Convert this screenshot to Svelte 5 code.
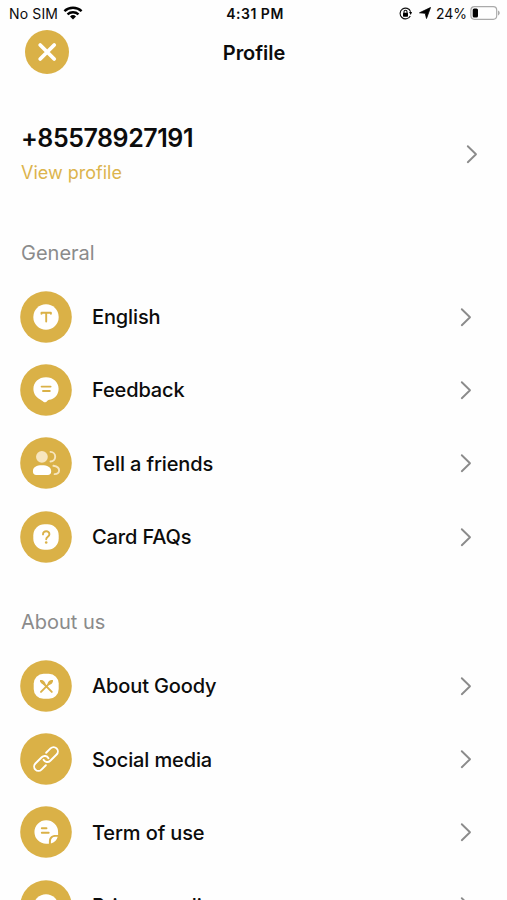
<script lang="ts">
    type Item = { label: string; icon: string };

    const sections: { title: string; items: Item[] }[] = [
        {
            title: "General",
            items: [
                { label: "English", icon: "language" },
                { label: "Feedback", icon: "feedback" },
                { label: "Tell a friends", icon: "friends" },
                { label: "Card FAQs", icon: "faq" }
            ]
        },
        {
            title: "About us",
            items: [
                { label: "About Goody", icon: "goody" },
                { label: "Social media", icon: "link" },
                { label: "Term of use", icon: "terms" },
                { label: "Privacy policy", icon: "privacy" }
            ]
        }
    ];
</script>

{#snippet chevron()}
    <svg class="chevron" width="12" height="20" viewBox="0 0 12 20">
        <path d="M1.8 2.2 10 10.2l-8.200 8" />
    </svg>
{/snippet}

{#snippet rowIcon(name: string)}
    <svg class="row-icon" viewBox="0 0 52 52">
        <circle class="gold" cx="26" cy="26" r="25.800" />
        {#if name === "language"}
            <circle class="white" cx="26" cy="26" r="12.700" />
            <path class="gold-line" d="M21.500 22.800v-1.100h9.400v1.100M26.200 22v8.500" />
        {:else if name === "feedback"}
            <path class="white" d="M26 13.300c7.200 0 12.600 4.900 12.600 11.400 0 6.300-4.500 10.600-9.400 11-1.900.2-2.200 2.600-4 2.600-1.300 0-2.300-1.300-3.500-1.900-5.200-2.300-8.300-6.200-8.300-11.300 0-6.900 5.400-11.800 12.600-11.800z" />
            <path class="gold-line" d="M21.600 22.600h9M23 27h6.800" />
        {:else if name === "friends"}
            <circle class="cream" cx="21.900" cy="19.800" r="5.900" />
            <path class="white" d="M12.900 34.300c0-4.300 3.700-6 9-6s9.300 1.700 9.300 6c0 2.500-1.300 3.700-3.300 3.700H16.200c-2 0-3.300-1.200-3.300-3.700z" />
            <path class="cream-line" d="M30.500 14.900c2.700.2 4.700 2.200 4.700 4.800s-2 4.600-4.700 4.800M33.400 28.800c3.600.6 5.800 2 5.700 4.700-.1 2.200-1.800 3.500-4.500 3.600" />
        {:else if name === "faq"}
            <rect class="white" x="13.300" y="13.300" width="25.400" height="25.400" rx="11.200" />
            <path class="gold-line" d="M23 23.400c-.1-4.200 6.500-4.200 6.400-.2 0 2.500-3.200 2.400-3.200 5" />
            <circle class="gold" cx="26.200" cy="31.500" r="1.300" />
        {:else if name === "goody"}
            <rect class="white" x="13.700" y="13.800" width="25" height="25" rx="9.800" />
            <path class="gold-line" d="m21 21 10.800 10.900M31.900 20.900 21 31.900" />
            <path class="gold" d="M19.900 20c3.300-.5 5.700 1.600 5.800 5-3.400-.1-5.600-2-5.800-5zM33 20c.2 3.100-1.900 5.200-5.500 5.200-.1-3.500 2.100-5.700 5.500-5.200z" />
        {:else if name === "link"}
            <g class="white-line" transform="rotate(-45 26 26)">
                <path d="M21.500 30.300h-6.200a4.300 4.300 0 0 1 0-8.600h8.900a4.300 4.300 0 0 1 4.100 5.500" />
                <path d="M30.500 21.700h6.200a4.300 4.300 0 0 1 0 8.600h-8.900a4.300 4.300 0 0 1-4.100-5.500" />
            </g>
        {:else if name === "terms"}
            <path class="white" d="M26.200 14.300a11.900 11.900 0 0 1 11.900 11.900v2.900h-2.400c-4.500 0-6.800 2.300-6.800 6.700v2h-2.700a11.750 11.750 0 0 1 0-23.500z" />
            <path class="white" d="M37.700 30.800c-.7 3.100-3.300 5.700-6.800 6.700v-1.800c0-3.200 1.500-4.900 4.800-4.900z" />
            <path class="gold-line" d="M21.800 22.300h4.700M21.800 26.800h6.900" />
        {:else}
            <circle class="white" cx="26" cy="26.600" r="12.400" />
        {/if}
    </svg>
{/snippet}

<div class="screen">
    <div class="status-bar">
        <div class="status-left">
            <span>No SIM</span>
            <svg width="20" height="14" viewBox="0 0 20 14">
                <g class="wifi">
                    <path d="M1.400 5.100a12.600 12.600 0 0 1 17.200 0" />
                    <path d="M4.500 8.300a8.300 8.300 0 0 1 11 0" />
                </g>
                <path d="m10 13.400-3-3a4.400 4.400 0 0 1 6 0z" />
            </svg>
        </div>
        <span class="time">4:31 PM</span>
        <div class="status-right">
            <svg class="lock" width="13" height="13" viewBox="0 0 13 13">
                <path class="ring" d="M11.600 4.700A5.400 5.400 0 1 0 11.300 9" />
                <path d="m10 5 3 .1-1.200 2.800z" />
                <rect x="4" y="5.700" width="5" height="4" rx=".6" />
                <path class="ring" d="M5 6V4.700a1.500 1.500 0 0 1 3 0V6" />
            </svg>
            <svg class="arrow" width="12" height="12" viewBox="0 0 12 12">
                <path d="M11.500.5 7.500 11.500l-1.300-5.200-5.700-.5z" />
            </svg>
            <span>24%</span>
            <svg class="battery" width="31" height="14" viewBox="0 0 31 14">
                <rect class="case" x=".9" y=".7" width="25.800" height="12.600" rx="3.500" />
                <rect x="2.700" y="2.500" width="5.300" height="9" rx="1.500" />
                <path class="cap" d="M28 4.600c2.300.8 2.300 4 0 4.800z" />
            </svg>
        </div>
    </div>

    <header>
        <button class="close" aria-label="Close">
            <svg width="44" height="44" viewBox="0 0 44 44">
                <path d="m15.200 15 14 14M29.200 15l-14 14" />
            </svg>
        </button>
        <h1>Profile</h1>
    </header>

    <div class="profile">
        <div>
            <div class="phone">+85578927191</div>
            <div class="view">View profile</div>
        </div>
        {@render chevron()}
    </div>

    {#each sections as section}
        <section>
            <h2>{section.title}</h2>
            {#each section.items as item}
                <div class="row">
                    {@render rowIcon(item.icon)}
                    <span class="label">{item.label}</span>
                    {@render chevron()}
                </div>
            {/each}
        </section>
    {/each}
</div>

<style>
    :global(body) {
        background: #fefefe;
        overflow: hidden;
    }
    .screen {
        height: 900px;
        overflow: hidden;
        font-family: Inter, sans-serif;
        color: #0c0c0c;
    }
    .status-bar {
        display: grid;
        grid-template-columns: 1fr auto 1fr;
        align-items: center;
        height: 28px;
        padding: 0 6px 2px 9px;
        box-sizing: border-box;
        font-size: 14px;
    }
    .status-left, .status-right {
        display: flex;
        align-items: center;
    }
    .status-left {
        gap: 5px;
        letter-spacing: 0.15px;
    }
    .status-right {
        justify-content: flex-end;
    }
    .wifi {
        fill: none;
        stroke: #000;
        stroke-width: 2.4;
    }
    .time {
        font-weight: 600;
        letter-spacing: 0.5px;
    }
    .ring {
        fill: none;
        stroke: #111;
        stroke-width: 1.1;
    }
    .arrow {
        margin: 0 5px 0 7px;
        stroke: #000;
        stroke-width: 0.8;
        stroke-linejoin: round;
    }
    .battery {
        margin-left: 3px;
    }
    .case {
        fill: none;
        stroke: #aaa;
        stroke-width: 1.2;
    }
    .cap {
        fill: #aaa;
    }
    header {
        display: grid;
        grid-template-columns: 44px 1fr 44px;
        align-items: center;
        height: 48px;
        padding: 0 25px;
    }
    .close {
        width: 44px;
        height: 44px;
        padding: 0;
        border: 0;
        border-radius: 50%;
        background: #dab147;
    }
    .close svg {
        display: block;
        fill: none;
        stroke: #fff;
        stroke-width: 3.8;
        stroke-linecap: round;
    }
    h1 {
        margin: 0;
        padding: 1px 0 0 1px;
        text-align: center;
        font-size: 20px;
        font-weight: 600;
        letter-spacing: -0.05px;
    }
    .profile {
        display: flex;
        align-items: center;
        justify-content: space-between;
        height: 151px;
        padding: 7px 29px 0 21px;
        box-sizing: border-box;
    }
    .profile .chevron {
        margin-top: -3px;
    }
    .phone {
        font-size: 25px;
        line-height: 36px;
        font-weight: 600;
        letter-spacing: -0.45px;
    }
    .view {
        font-size: 18px;
        line-height: 34px;
        color: #dcb44d;
    }
    section {
        margin-bottom: 22.9px;
    }
    h2 {
        margin: 0;
        padding-left: 21px;
        font-size: 20px;
        line-height: 53px;
        font-weight: 400;
        color: #8b8b8b;
    }
    .row {
        display: flex;
        align-items: center;
        height: 73.3px;
        padding: 0 35px 0 20px;
    }
    .row-icon {
        width: 52px;
        height: 52px;
        margin-right: 20px;
    }
    .label {
        flex: 1;
        padding-top: 1px;
        font-size: 20px;
        font-weight: 500;
        letter-spacing: -0.13px;
    }
    .chevron {
        fill: none;
        stroke: #8b8b8b;
        stroke-width: 1.9;
        stroke-linecap: round;
        stroke-linejoin: round;
    }
    .gold {
        fill: #dab147;
    }
    .white {
        fill: #fff;
    }
    .cream {
        fill: #f7e6bf;
    }
    .gold-line, .white-line, .cream-line {
        fill: none;
        stroke: #dab147;
        stroke-width: 1.9;
        stroke-linecap: round;
        stroke-linejoin: round;
    }
    .white-line {
        stroke: #fff;
    }
    .cream-line {
        stroke: #f7e6bf;
    }
</style>
